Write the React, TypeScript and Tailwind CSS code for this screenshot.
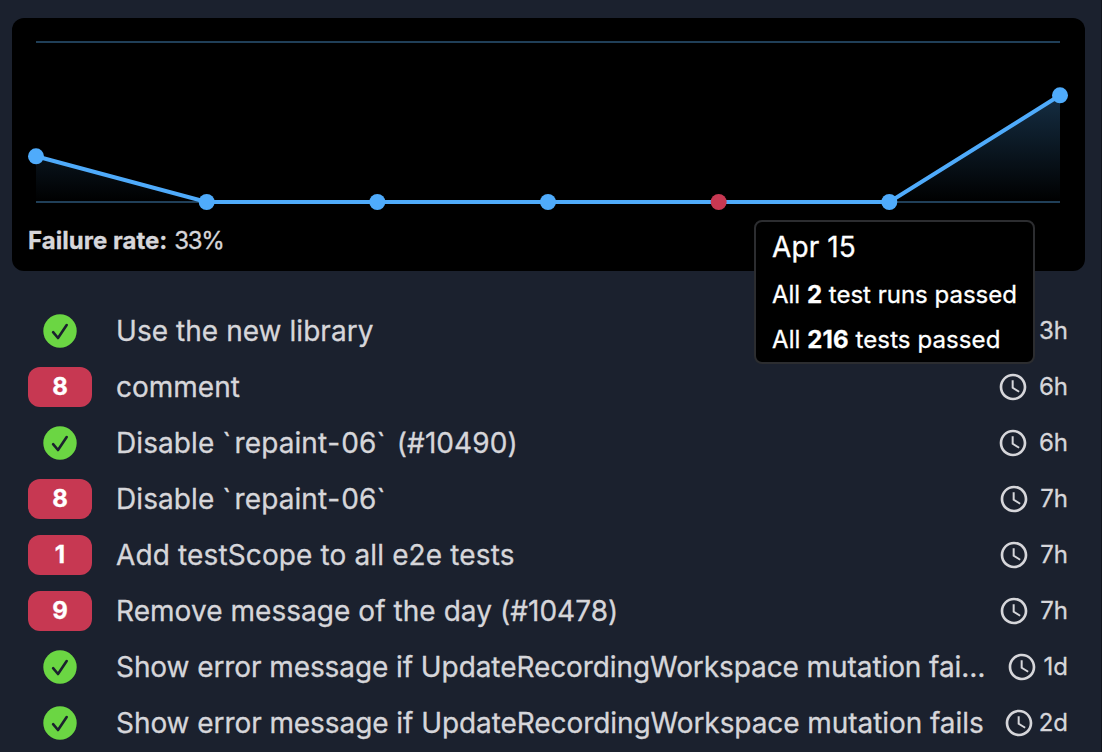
type Run = { failed?: number; title: string; age: string; gap: string; tracking: string };

const runs: Run[] = [
  { title: "Use the new library", age: "3h", gap: "gap-[10px]", tracking: "tracking-[0.05px]" },
  { failed: 8, title: "comment", age: "6h", gap: "gap-[10px]", tracking: "tracking-[0px]" },
  { title: "Disable `repaint-06` (#10490)", age: "6h", gap: "gap-[10px]", tracking: "tracking-[0.08px]" },
  { failed: 8, title: "Disable `repaint-06`", age: "7h", gap: "gap-[10.5px]", tracking: "tracking-[0.08px]" },
  { failed: 1, title: "Add testScope to all e2e tests", age: "7h", gap: "gap-[10.5px]", tracking: "tracking-[0.13px]" },
  { failed: 9, title: "Remove message of the day (#10478)", age: "7h", gap: "gap-[10.5px]", tracking: "tracking-[0.05px]" },
  { title: "Show error message if UpdateRecordingWorkspace mutation fai…", age: "1d", gap: "gap-[5.5px]", tracking: "tracking-[-0.085px]" },
  { title: "Show error message if UpdateRecordingWorkspace mutation fails", age: "2d", gap: "gap-1", tracking: "tracking-[-0.07px]" },
];

const points = [
  [36, 156.3],
  [206.67, 202],
  [377.33, 202],
  [548, 202],
  [718.67, 202],
  [889.33, 202],
  [1060, 95.3],
];

function CheckIcon() {
  return (
    <svg className="size-[34px]" viewBox="0 0 34 34" fill="none">
      <circle cx="17" cy="17" r="16.7" fill="#6bd643" />
      <path d="M10.1 18.2L15 24L23.7 11" stroke="#1b212e" strokeWidth="2.6" strokeLinecap="round" strokeLinejoin="round" />
    </svg>
  );
}

function ClockIcon() {
  return (
    <svg className="size-8 shrink-0" viewBox="0 0 24 24" fill="#d6d6da">
      <path d="M11.99 2C6.47 2 2 6.48 2 12s4.47 10 9.99 10C17.52 22 22 17.52 22 12S17.52 2 11.99 2zM12 20c-4.42 0-8-3.58-8-8s3.58-8 8-8 8 3.58 8 8-3.58 8-8 8z" />
      <path d="M12.5 7H11v6l5.25 3.15.75-1.23-4.5-2.67z" />
    </svg>
  );
}

function Title({ text }: { text: string }) {
  return (
    <>
      {text.split(/([`-])/).map((part, i) =>
        part === "`" || part === "-" ? (
          <span key={i} className={part === "`" ? "tracking-[3.3px]" : "tracking-[1.2px]"}>
            {part}
          </span>
        ) : (
          part
        ),
      )}
    </>
  );
}

function Chart() {
  return (
    <svg className="block h-[202px] w-[1073px]" viewBox="12 18 1073 202" fill="none">
      <defs>
        <linearGradient id="area" x1="0" y1="42" x2="0" y2="202" gradientUnits="userSpaceOnUse">
          <stop stopColor="#4fabfb" stopOpacity="0.4" />
          <stop offset="1" stopColor="#4fabfb" stopOpacity="0" />
        </linearGradient>
      </defs>
      <path d="M36 42H1060M36 202H1060" stroke="#203f58" strokeWidth="2" />
      <path d={`M${points.map((p) => p.join(" ")).join("L")}V202H36Z`} fill="url(#area)" />
      <polyline points={points.map((p) => p.join(",")).join(" ")} stroke="#4fabfb" strokeWidth="4" />
      {points.map(([x, y], i) => (
        <circle key={i} cx={x} cy={y} r="8" fill={i === 4 ? "#c73852" : "#4fabfb"} />
      ))}
    </svg>
  );
}

export default function App() {
  return (
    <div className="relative h-[752px] w-[1102px] overflow-hidden border-r border-[#10141d] bg-[#1b212e] pt-[18px] pl-3 font-['Inter',sans-serif] text-[#d6d6da] [-webkit-text-stroke:0.3px]">
      <section className="h-[253px] w-[1073px] rounded-xl bg-black">
        <Chart />
        <p className="pt-px pl-4 text-2xl leading-[40px]">
          <b className="font-bold tracking-[0.03px]">Failure rate:</b> <span className="tracking-[-1.2px]">33%</span>
        </p>
      </section>
      <ul className="mt-8 w-[1073px]">
        {runs.map((run, i) => (
          <li key={i} className="flex h-14 items-center pr-[17px] pl-4">
            <div className="flex w-16 shrink-0 justify-center">
              {run.failed ? (
                <span className="flex h-10 w-16 items-center justify-center rounded-xl bg-[#c73852] text-2xl font-bold text-white">
                  {run.failed}
                </span>
              ) : (
                <CheckIcon />
              )}
            </div>
            <span className={`ml-6 min-w-0 flex-1 text-[28px] leading-10 whitespace-nowrap ${run.tracking}`}>
              <Title text={run.title} />
            </span>
            <span className={`ml-4 flex shrink-0 items-center text-2xl ${run.gap}`}>
              <ClockIcon />
              {run.age}
            </span>
          </li>
        ))}
      </ul>
      <div className="absolute top-[220px] left-[754px] h-[144px] w-[281px] rounded-lg border-2 border-[#2c2d30] bg-black pl-4 whitespace-nowrap text-white">
        <p className="pt-[5px] text-[28px] leading-10 tracking-[0.1px]">Apr 15</p>
        <p className="mt-[5px] text-2xl leading-[45px]">
          All <b>2</b> test runs passed
        </p>
        <p className="text-2xl leading-[45px] tracking-[0.1px]">
          All <b>216</b> tests passed
        </p>
      </div>
    </div>
  );
}
